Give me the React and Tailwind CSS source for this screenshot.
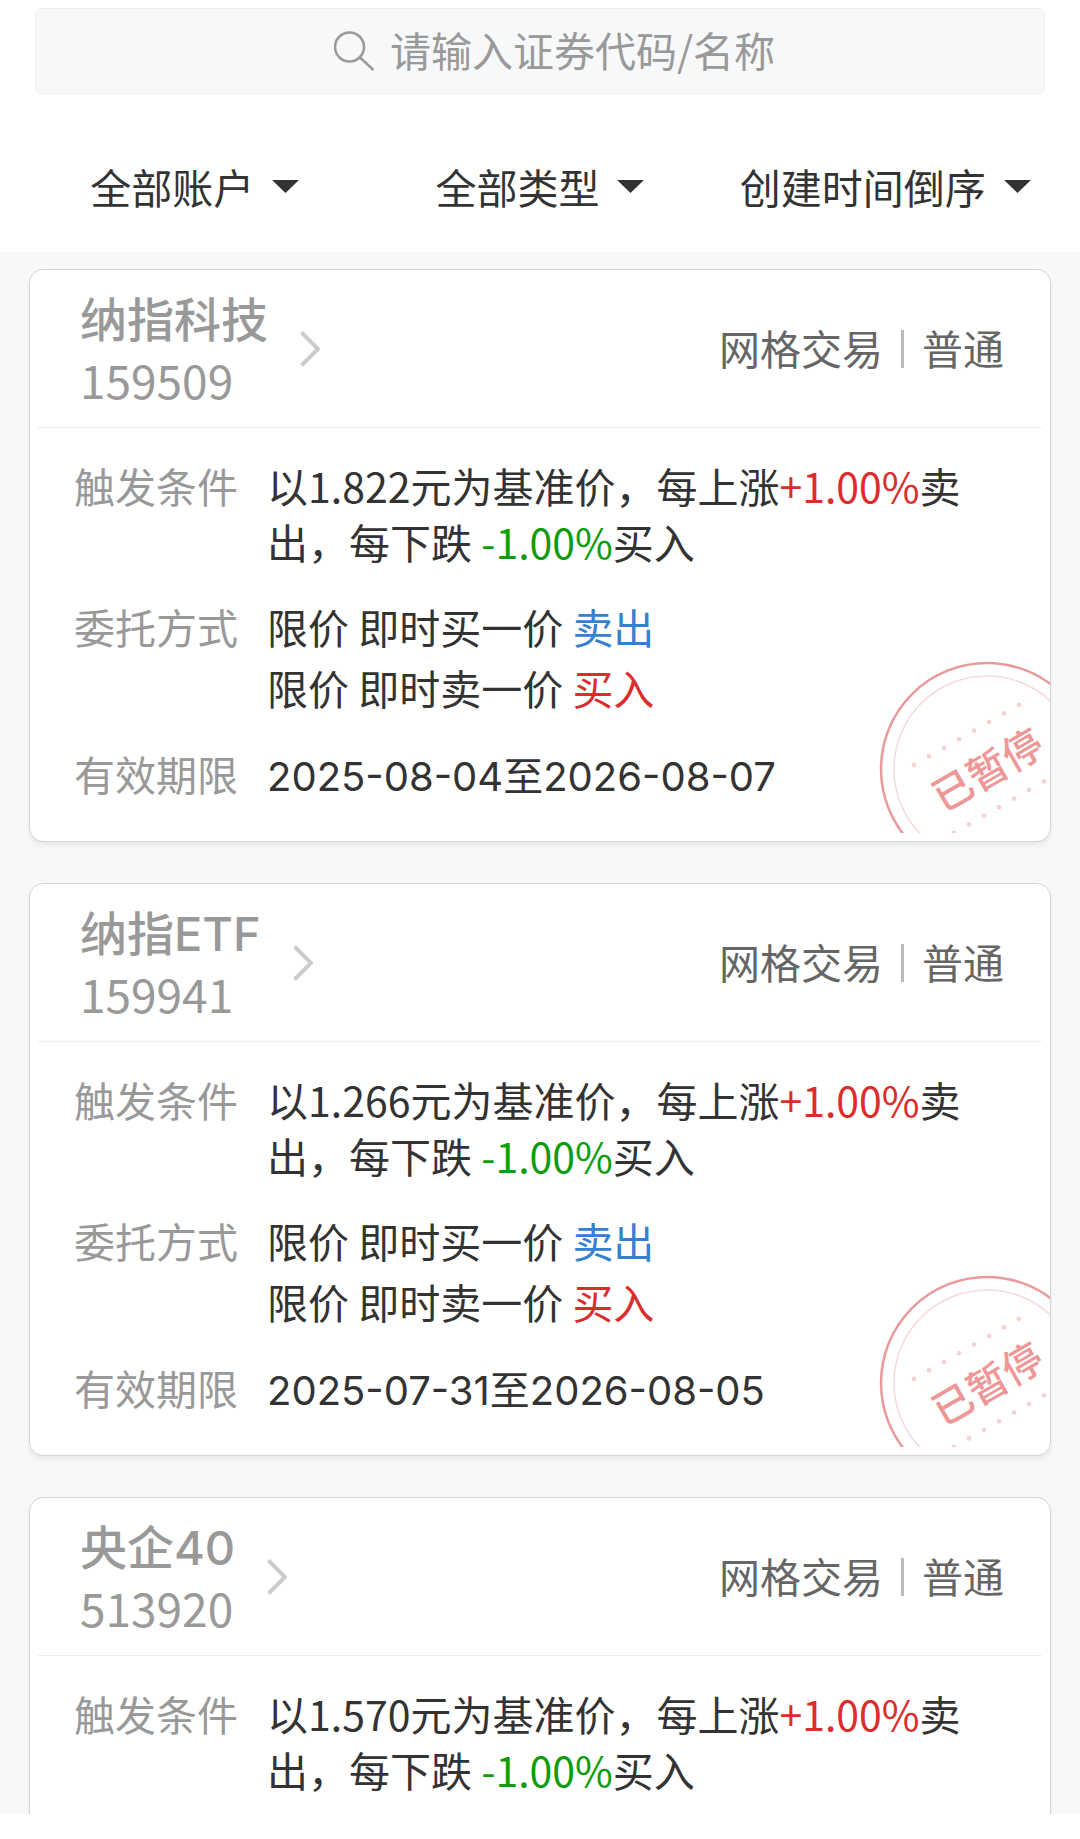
import React from "react";

const strategies = [
  { name: "纳指科技", code: "159509", base: "1.822", orders: true, from: "2025-08-04", to: "2026-08-07" },
  { name: "纳指ETF", code: "159941", base: "1.266", orders: true, from: "2025-07-31", to: "2026-08-05" },
  { name: "央企40", code: "513920", base: "1.570", orders: false },
];

const dots = [0, 1, 2, 3, 4, 5, 6, 7];

function PausedStamp() {
  return (
    <svg
      className="pointer-events-none absolute right-0 bottom-2 h-[172px] w-[172px]"
      viewBox="0 0 172 172"
      role="img"
      aria-label="已暂停"
    >
      <circle cx="109" cy="108" r="106" fill="none" stroke="#e99a9a" strokeWidth="2.5" />
      <circle cx="109" cy="108" r="93" fill="none" stroke="#f6d9d9" strokeWidth="1.5" />
      {dots.map((i) => (
        <circle key={i} cx={36 + i * 15} cy={104 - i * 8.6} r="2.4" fill="#f5d3d3" />
      ))}
      {dots.map((i) => (
        <circle key={i} cx={76 + i * 15} cy={172 - i * 8.6} r="2.4" fill="#f5d3d3" />
      ))}
      <text
        x="109"
        y="124"
        textAnchor="middle"
        transform="rotate(-30 109 108)"
        fill="#ee9797"
        fontSize="40"
        fontWeight="500"
      >
        已暂停
      </text>
    </svg>
  );
}

function Filter({ children }) {
  return (
    <button
      type="button"
      className="flex items-center justify-center gap-[18px] text-[41px] leading-[60px] whitespace-nowrap text-[#333]"
    >
      {children}
      <svg className="h-[13px] w-[27px] shrink-0" viewBox="0 0 27 13" aria-hidden="true">
        <path d="M0 0h27L13.5 13z" fill="#333" />
      </svg>
    </button>
  );
}

function Row({ label, className = "leading-[56px]", children }) {
  return (
    <div className={`flex ${className}`}>
      <dt className="w-[193px] shrink-0 text-[#999]">{label}</dt>
      <dd className="min-w-0 flex-1">{children}</dd>
    </div>
  );
}

function Card({ item }) {
  return (
    <article className="relative shrink-0 overflow-hidden rounded-[14px] border border-[#d3d4d6] bg-white px-2 pb-9 shadow-[0_4px_4px_rgba(0,0,0,0.06)]">
      <header className="flex h-[158px] items-center justify-between border-b border-[#eee] pr-[38px] pl-[42px]">
        <a href="#detail" className="flex items-center gap-8 text-[#999]">
          <span className="pb-1.5">
            <span className="block font-['Inter','Noto_Sans_CJK_SC',sans-serif] text-[47px] leading-[66px] font-medium">
              {item.name}
            </span>
            <span className="block text-[46px] leading-[52px]">{item.code}</span>
          </span>
          <svg className="h-9 w-5" viewBox="0 0 20 36" fill="none" aria-hidden="true">
            <path d="M1.5 1.5L18 18L1.5 34.5" stroke="#ccc" strokeWidth="4" />
          </svg>
        </a>
        <p className="flex items-center gap-[18px] pb-1 text-[41px] leading-[60px] text-[#666]">
          网格交易
          <span className="mt-1 h-[38px] w-[3px] bg-[#bbb]" />
          普通
        </p>
      </header>
      <dl className="flex flex-col gap-[27px] pt-[29px] pr-[60px] pl-9 text-[41px] text-[#333]">
        <Row label="触发条件">
          以{item.base}元为基准价，每上涨<span className="text-[#dc2d2d]">+1.00%</span>卖出，每下跌{" "}
          <span className="text-[#0f9d0f]">-1.00%</span>买入
        </Row>
        {item.orders && (
          <Row label="委托方式" className="leading-[61px]">
            <p>限价 即时买一价 <span className="text-[#3580cf]">卖出</span></p>
            <p>限价 即时卖一价 <span className="text-[#dc2d2d]">买入</span></p>
          </Row>
        )}
        {item.from && (
          <Row label="有效期限">
            <span className="font-['Inter','Noto_Sans_CJK_SC',sans-serif] text-[40px]">
              {item.from}至{item.to}
            </span>
          </Row>
        )}
      </dl>
      {item.orders && <PausedStamp />}
    </article>
  );
}

export default function App() {
  return (
    <div className="flex h-screen flex-col bg-white pb-[25px] font-['Noto_Sans_CJK_SC',sans-serif]">
      <div className="shrink-0 px-[35px] pt-2">
        <label className="flex h-[86px] items-center justify-center gap-4 rounded-md border border-[#eee] bg-[#f7f8fa] pl-[34px]">
          <svg className="h-10 w-10 shrink-0" viewBox="0 0 40 40" fill="none" stroke="#999" strokeWidth="2.5" aria-hidden="true">
            <circle cx="15.5" cy="16" r="14.5" />
            <path d="M26 26.5L39.5 39" />
          </svg>
          <input
            type="text"
            aria-label="请输入证券代码/名称"
            placeholder="请输入证券代码/名称"
            className="h-[60px] w-[390px] bg-transparent pb-[3px] text-[41px] text-[#333] outline-none placeholder:text-[#999]"
          />
        </label>
      </div>
      <nav className="grid h-[158px] shrink-0 grid-cols-3 items-center px-[22px] pt-[26px]">
        <Filter>全部账户</Filter>
        <Filter>全部类型</Filter>
        <Filter>创建时间倒序</Filter>
      </nav>
      <main className="flex min-h-0 flex-1 flex-col gap-[41px] overflow-hidden bg-[#f7f8fa] px-[29px] pt-[17px]">
        {strategies.map((item) => (
          <Card key={item.code} item={item} />
        ))}
      </main>
    </div>
  );
}
